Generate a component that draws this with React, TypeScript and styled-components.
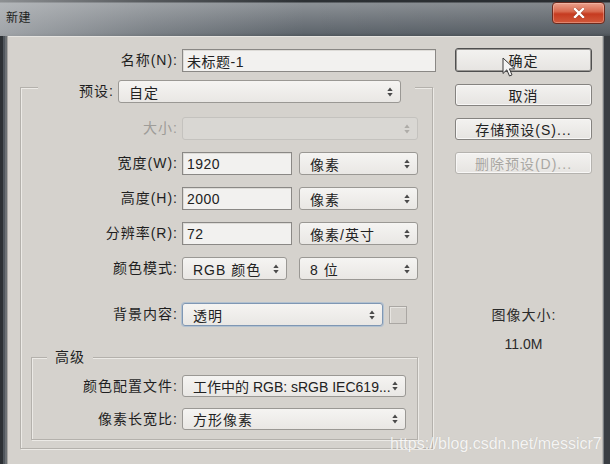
import React from 'react';
import styled, { createGlobalStyle } from 'styled-components';

const FONT = `"Liberation Sans", "Noto Sans CJK SC", sans-serif`;
const PANEL = '#d5d2cd';

const GlobalStyle = createGlobalStyle`
  html, body { margin: 0; padding: 0; }
  body { background: #3b4045; font-family: ${FONT}; }
  * { box-sizing: border-box; }
`;

const Window = styled.div`
  position: relative;
  width: 610px;
  height: 464px;
  display: flex;
  flex-direction: column;
  overflow: hidden;
  background: #3f4449;
`;

const TitleBar = styled.div`
  height: 36px;
  flex: none;
  display: flex;
  align-items: flex-start;
  justify-content: space-between;
  padding: 0 5px 0 6px;
  background:
    linear-gradient(90deg, rgba(205, 207, 209, 0.6) 0%, rgba(205, 207, 209, 0.25) 25%, rgba(0, 0, 0, 0) 50%, rgba(0, 0, 0, 0.08) 100%),
    linear-gradient(180deg, #2c3034 0, #2c3034 2px, #8c9196 3px, #757b81 18px, #5f666d 33px, #50575d 36px);
`;

const Title = styled.span`
  margin-top: 10px;
  font-size: 12px;
  line-height: 16px;
  letter-spacing: 0.5px;
  color: #1d1f21;
`;

const CloseButton = styled.div`
  margin-top: 2px;
  width: 53px;
  height: 22px;
  border: 1px solid #6a2b1f;
  border-radius: 4px;
  background: linear-gradient(180deg, #eaa08c 0%, #d86a4f 42%, #c63b20 55%, #d2593b 100%);
  box-shadow: inset 0 0 0 1px rgba(255, 220, 210, 0.35);
  display: flex;
  align-items: center;
  justify-content: center;
`;

const Body = styled.div`
  flex: 1;
  display: flex;
  min-height: 0;
`;

const FrameSide = styled.div<{ $side: 'left' | 'right' }>`
  width: 8px;
  flex: none;
  background: ${p =>
    p.$side === 'left'
      ? 'linear-gradient(90deg, #2d3135 0 3px, #50565c 3px 5px, #6c7074 5px 7px, #aaa8a4 7px 8px)'
      : 'linear-gradient(90deg, #b9b7b3 0 1px, #7b7f83 1px 2px, #3a3e43 2px 8px)'};
`;

const Panel = styled.div`
  flex: 1;
  background: ${PANEL};
  border-top: 1px solid #e6e4e0;
  display: flex;
  padding-top: 11px;
`;

const LeftCol = styled.div`
  width: 428px;
  flex: none;
  display: flex;
  flex-direction: column;
`;

const RightCol = styled.div`
  margin-left: 19px;
  width: 137px;
  flex: none;
  display: flex;
  flex-direction: column;
  gap: 12px;
`;

const Row = styled.div<{ $mt?: number; $h?: number }>`
  display: flex;
  align-items: center;
  gap: 4px;
  height: ${p => p.$h ?? 23}px;
  margin-top: ${p => p.$mt ?? 0}px;
`;

const Label = styled.span<{ $w?: number; $disabled?: boolean }>`
  flex: none;
  width: ${p => (p.$w ? `${p.$w}px` : 'auto')};
  text-align: right;
  font-size: 14px;
  line-height: 23px;
  letter-spacing: 1px;
  white-space: nowrap;
  color: ${p => (p.$disabled ? '#9e9c98' : '#1f1f1f')};
`;

const TextField = styled.div<{ $w?: number }>`
  height: 23px;
  width: ${p => (p.$w ? `${p.$w}px` : 'auto')};
  flex: ${p => (p.$w ? 'none' : '1')};
  border: 1px solid #8a8885;
  background: #f2f1ef;
  box-shadow: inset 1px 1px 0 #dddbd7;
  padding: 0 4px;
  display: flex;
  align-items: center;
  font-size: 14px;
  letter-spacing: 0.5px;
  color: #222;
`;

const SelectBox = styled.div<{ $w: number; $h?: number; $ml?: number; $disabled?: boolean; $focus?: boolean }>`
  height: ${p => p.$h ?? 23}px;
  width: ${p => p.$w}px;
  margin-left: ${p => p.$ml ?? 0}px;
  flex: none;
  border: 1px solid ${p => (p.$focus ? '#7f97b4' : p.$disabled ? '#c4c2be' : '#9a9894')};
  border-radius: 3px;
  background: ${p => (p.$disabled ? '#d9d7d3' : 'linear-gradient(180deg, #f5f4f2 0%, #e9e7e4 100%)')};
  box-shadow: ${p => (p.$focus ? '0 0 0 1px rgba(150, 178, 210, 0.55)' : 'none')};
  display: flex;
  align-items: center;
  justify-content: space-between;
  padding: 0 7px 0 10px;
  color: #222;
`;

const SelectText = styled.span<{ $tight?: boolean }>`
  font-size: 14px;
  letter-spacing: ${p => (p.$tight ? 0 : 1)}px;
  white-space: nowrap;
  overflow: hidden;
`;

const Swatch = styled.div`
  margin-left: 2px;
  width: 18px;
  height: 18px;
  border: 1px solid #aaa7a3;
  background: #d3d0cb;
  box-shadow: inset 1px 1px 0 #e7e5e1;
`;

const Group = styled.fieldset<{ $ml: number; $w: number; $mt: number; $pt: number; $pb: number }>`
  margin: ${p => p.$mt}px 0 0 ${p => p.$ml}px;
  width: ${p => p.$w}px;
  min-width: 0;
  padding: ${p => p.$pt}px 0 ${p => p.$pb}px 0;
  border: 1px solid #b4b1ac;
  box-shadow: inset 1px 1px 0 #eceae6, 1px 1px 0 #eceae6;
  display: flex;
  flex-direction: column;
`;

const PresetLegend = styled.legend`
  margin-left: 17px;
  padding: 0 14px 0 0;
  height: 14px;
  display: flex;
  align-items: flex-start;
  gap: 4px;
  background: ${PANEL};
`;

const GroupTitle = styled.legend`
  margin-left: 15px;
  padding: 0 8px;
  font-size: 14px;
  line-height: 18px;
  letter-spacing: 1px;
  color: #1f1f1f;
  background: ${PANEL};
`;

const Button = styled.div<{ $default?: boolean; $disabled?: boolean }>`
  height: ${p => (p.$default ? 24 : 22)}px;
  border: 1px solid ${p => (p.$default ? '#4f4f4f' : p.$disabled ? '#b5b3af' : '#858380')};
  border-radius: 3px;
  background: linear-gradient(180deg, #f3f2f0 0%, #e6e4e1 100%);
  box-shadow: ${p => (p.$default ? 'inset 0 0 0 1px #9a9895' : 'inset 0 0 0 1px #f8f7f6')};
  display: flex;
  align-items: center;
  justify-content: center;
  font-size: 14px;
  letter-spacing: 1px;
  color: ${p => (p.$disabled ? '#a9a7a3' : '#222')};
`;

const ImageSize = styled.div`
  margin-top: 121px;
  display: flex;
  flex-direction: column;
  align-items: center;
  gap: 13px;
  color: #2a2a2a;
  font-size: 14px;
  line-height: 16px;
`;

const ImageSizeTitle = styled.span`
  letter-spacing: 1px;
  padding-left: 1px;
`;

const ImageSizeValue = styled.span`
  letter-spacing: 0;
`;

const Watermark = styled.div`
  position: absolute;
  left: 390px;
  top: 435px;
  font-family: "Liberation Sans", Arial, sans-serif;
  font-size: 16px;
  line-height: 18px;
  color: rgba(255, 255, 255, 0.85);
  text-shadow: 0 0 1px rgba(0, 0, 0, 0.12);
  white-space: nowrap;
`;

const Cursor = styled.svg`
  position: absolute;
  left: 502px;
  top: 57px;
`;

const UpDown = ({ disabled }: { disabled?: boolean }) => (
  <svg width="6" height="10" viewBox="0 0 6 10" style={{ flex: 'none' }}>
    <path d="M3 0.5 L5.7 3.9 H0.3 Z M3 9.5 L0.3 6.1 H5.7 Z" fill={disabled ? '#aeaca8' : '#4a4a4a'} />
  </svg>
);

const Select = ({
  w,
  h,
  ml,
  disabled,
  focus,
  tight,
  children,
}: {
  w: number;
  h?: number;
  ml?: number;
  disabled?: boolean;
  focus?: boolean;
  tight?: boolean;
  children?: React.ReactNode;
}) => (
  <SelectBox $w={w} $h={h} $ml={ml} $disabled={disabled} $focus={focus}>
    <SelectText $tight={tight}>{children}</SelectText>
    <UpDown disabled={disabled} />
  </SelectBox>
);

export default function App() {
  return (
    <>
      <GlobalStyle />
      <Window>
        <TitleBar>
          <Title>新建</Title>
          <CloseButton>
            <svg width="12" height="10" viewBox="0 0 12 10">
              <path d="M2 1 L10 9 M10 1 L2 9" stroke="#5a2216" strokeWidth="3.6" strokeLinecap="square" opacity="0.35" />
              <path d="M2 1 L10 9 M10 1 L2 9" stroke="#ffffff" strokeWidth="2.4" strokeLinecap="square" />
            </svg>
          </CloseButton>
        </TitleBar>
        <Body>
          <FrameSide $side="left" />
          <Panel>
            <LeftCol>
              <Row $mt={1}>
                <Label $w={170}>名称(N):</Label>
                <TextField>未标题-1</TextField>
              </Row>
              <Group $ml={12} $w={413} $mt={8} $pt={23} $pb={8}>
                <PresetLegend>
                  <Label $w={76}>预设:</Label>
                  <Select w={283}>自定</Select>
                </PresetLegend>
                <Row>
                  <Label $w={157} $disabled>大小:</Label>
                  <Select w={236} disabled />
                </Row>
                <Row $mt={12}>
                  <Label $w={157}>宽度(W):</Label>
                  <TextField $w={110}>1920</TextField>
                  <Select w={119} ml={3}>像素</Select>
                </Row>
                <Row $mt={12}>
                  <Label $w={157}>高度(H):</Label>
                  <TextField $w={110}>2000</TextField>
                  <Select w={119} ml={3}>像素</Select>
                </Row>
                <Row $mt={12}>
                  <Label $w={157}>分辨率(R):</Label>
                  <TextField $w={110}>72</TextField>
                  <Select w={119} ml={3}>像素/英寸</Select>
                </Row>
                <Row $mt={12}>
                  <Label $w={157}>颜色模式:</Label>
                  <Select w={105}>RGB 颜色</Select>
                  <Select w={119} ml={8}>8 位</Select>
                </Row>
                <Row $mt={23}>
                  <Label $w={157}>背景内容:</Label>
                  <Select w={201} focus>透明</Select>
                  <Swatch />
                </Row>
                <Group $ml={10} $w={387} $mt={22} $pt={9} $pb={9}>
                  <GroupTitle>高级</GroupTitle>
                  <Row $h={22}>
                    <Label $w={146}>颜色配置文件:</Label>
                    <Select w={224} h={22} tight>工作中的 RGB: sRGB IEC619...</Select>
                  </Row>
                  <Row $h={22} $mt={11}>
                    <Label $w={146}>像素长宽比:</Label>
                    <Select w={224} h={22}>方形像素</Select>
                  </Row>
                </Group>
              </Group>
            </LeftCol>
            <RightCol>
              <Button $default>确定</Button>
              <Button>取消</Button>
              <Button>存储预设(S)...</Button>
              <Button $disabled>删除预设(D)...</Button>
              <ImageSize>
                <ImageSizeTitle>图像大小:</ImageSizeTitle>
                <ImageSizeValue>11.0M</ImageSizeValue>
              </ImageSize>
            </RightCol>
          </Panel>
          <FrameSide $side="right" />
        </Body>
        <Cursor width="14" height="21" viewBox="0 0 14 21">
          <path
            d="M1 1 L1 16.5 L4.8 12.8 L7.5 19 L10 17.9 L7.4 11.9 L12.6 11.9 Z"
            fill="#f4f4f4"
            stroke="#3a3a3a"
            strokeWidth="1"
            strokeLinejoin="round"
          />
        </Cursor>
        <Watermark>https://blog.csdn.net/messicr7</Watermark>
      </Window>
    </>
  );
}
